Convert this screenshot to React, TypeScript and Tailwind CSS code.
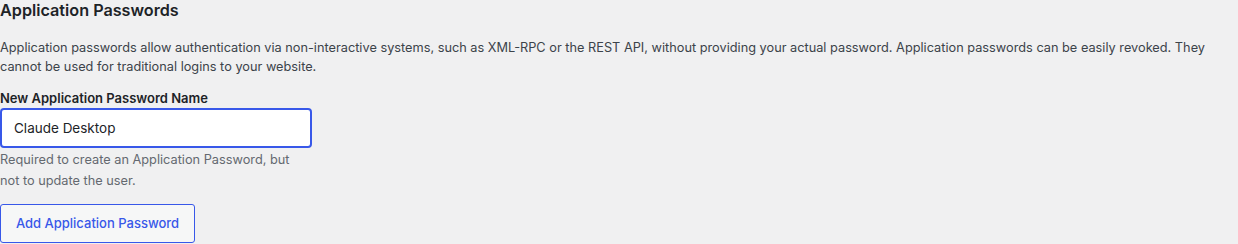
export default function App() {
  return (
    <div className="min-h-[244px] w-[1238px] bg-[#f0f0f1] text-[12.75px] text-[#3c434a] overflow-hidden" style={{ fontFamily: 'Inter, "Noto Sans", sans-serif' }}>
      <h2 className="text-[16.2px] font-semibold leading-[20px] text-[#1d2327] pt-0">Application Passwords</h2>
      <p className="mt-[18px] leading-[19px] pr-[10px]">
        Application passwords allow authentication via non-interactive systems, such as XML-RPC or the REST API, without providing your actual password. Application passwords can be easily revoked. They cannot be used for traditional logins to your website.
      </p>
      <div className="mt-[13px] font-semibold text-[#1d2327] leading-[18px] text-[13px]">New Application Password Name</div>
      <div className="mt-[1px] w-[312px] h-[40px] rounded-[4px] border-2 border-[#3858e9] bg-white flex items-center pl-[12px] text-[13.5px] text-[#1d2327]">
        Claude Desktop
      </div>
      <p className="mt-[1px] w-[300px] leading-[21px] text-[#646970]">
        Required to create an Application Password, but not to update the user.
      </p>
      <button className="mt-[13px] h-[39px] w-[195px] rounded-[3px] border border-[#3858e9] bg-[#f6f7f7] text-[#3858e9] font-medium text-[13px] flex items-center justify-center">
        Add Application Password
      </button>
    </div>
  );
}
